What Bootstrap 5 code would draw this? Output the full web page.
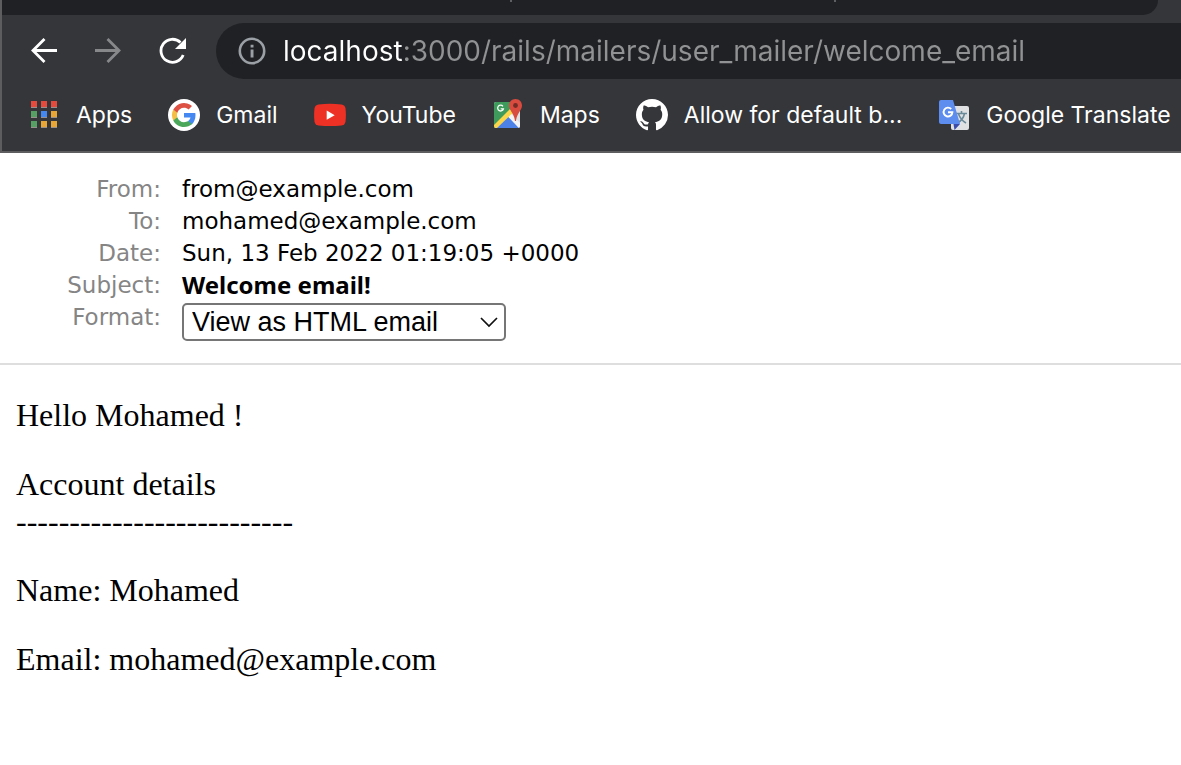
<!DOCTYPE html>
<html lang="en">
<head>
<meta charset="utf-8">
<meta name="viewport" content="width=device-width, initial-scale=1">
<title>Welcome email!</title>
<link href="https://cdn.jsdelivr.net/npm/bootstrap@5.3.0/dist/css/bootstrap.min.css" rel="stylesheet">
<style>
  body { background: #fff; color: #000; }
  .browser { background: #35363a; border-left: 2px solid #5d5d60; border-bottom: 2px solid #5d5d60; font-family: Inter, sans-serif; color: #fff; overflow: hidden; }
  .tabstrip { height: 15px; background: #202124; border-bottom-right-radius: 18px; margin-right: 23px; padding: 0 322px 0 508px; }
  .tabstrip span { width: 2px; height: 2px; background: #5f6063; }
  .toolbar { padding: 8px 0 8px 29px; }
  .toolbar button { width: 26px; height: 28px; margin-right: 38px; line-height: 1; }
  .toolbar button.reload { margin-right: 31px; }
  .omnibox { height: 56px; background: #202124; border-radius: 28px 0 0 28px; padding-left: 22px; }
  .address { color: #919294; font-size: 28px; line-height: 36px; margin-left: 17px; outline: 0;
    background: linear-gradient(90deg, #fff 120px, #919294 120px); -webkit-background-clip: text; background-clip: text; -webkit-text-fill-color: transparent; }
  .bookmarks { padding: 8px 0 16px 26px; gap: 36px; font-size: 23px; line-height: 40px; }
  .bookmarks a { gap: 16px; }
  svg { display: block; flex: none; }
  .mail-head { font-family: "DejaVu Sans", sans-serif; font-size: 23px; line-height: 32px; padding: 20px 0 22px; border-bottom: 2px solid #dedede; }
  .mail-head dt { width: 161px; color: #858585; }
  .mail-head dd { margin-left: 21px; }
  .subject { font-family: "Noto Sans", sans-serif; font-size: 24px; }
  .format { font-family: "Liberation Sans", sans-serif; font-size: 27px; line-height: 34px; width: 324px; height: 38px; margin-top: 2px; padding: 0 8px; color: #000; border: 2px solid #767676; border-radius: 5px; background-position: right 6px center; background-size: 18px 12px;
    background-image: url("data:image/svg+xml,%3csvg xmlns='http://www.w3.org/2000/svg' viewBox='0 0 18 12'%3e%3cpath d='M1 2l8 8 8-8' fill='none' stroke='%23111' stroke-width='1.700'/%3e%3c/svg%3e"); }
  .mail-body { font-family: "Liberation Serif", serif; font-size: 32px; line-height: 37px; padding: 32px 16px; }
  .mail-body p { margin-bottom: 32px; }
</style>
</head>
<body>
<header class="browser">
  <div class="tabstrip d-flex justify-content-between"><span></span><span></span></div>
  <div class="toolbar d-flex align-items-center">
    <button type="button" class="btn p-0 border-0" aria-label="Back">
      <svg width="26" height="28" viewBox="0 0 26 28" fill="none" stroke="#fff" stroke-width="2.800"><path d="M13.500 2 2 13.500 13.500 25M2 13.500h24"/></svg>
    </button>
    <button type="button" class="btn p-0 border-0" aria-label="Forward">
      <svg width="26" height="28" viewBox="0 0 26 28" fill="none" stroke="#87888a" stroke-width="2.800"><path d="M12.500 2 24 13.500 12.500 25M24 13.500H0"/></svg>
    </button>
    <button type="button" class="btn p-0 border-0 reload" aria-label="Reload">
      <svg width="27" height="28" viewBox="0 0 27 28"><path d="M21.500 5.500A11.500 11.500 0 1 0 24.200 18" fill="none" stroke="#fff" stroke-width="2.800"/><path d="M27 1v11H16z" fill="#fff"/></svg>
    </button>
    <form class="omnibox d-flex align-items-center flex-grow-1">
      <svg width="28" height="28" viewBox="0 0 28 28"><circle cx="14" cy="14" r="12.200" fill="none" stroke="#9aa0a6" stroke-width="2.600"/><path d="M12.600 7.700h2.900v2.800h-2.900zM12.600 12.600h2.900v8h-2.900z" fill="#9aa0a6"/></svg>
      <input class="address flex-grow-1 border-0 p-0" type="text" aria-label="Address" value="localhost:3000/rails/mailers/user_mailer/welcome_email">
    </form>
  </div>
  <nav class="bookmarks d-flex text-nowrap" aria-label="Bookmarks">
    <a href="#" class="d-flex align-items-center text-reset text-decoration-none">
      <svg width="32" height="32" viewBox="0 0 32 32"><path d="M3 2h6v6H3zM13 2h6v6h-6zM23 2h6v6h-6z" fill="#e54b3c"/><path d="M3 12h6v6H3zM3 22h6v6H3z" fill="#55a062"/><path d="M13 12h6v6h-6z" fill="#4688f1"/><path d="M23 12h6v6h-6zM13 22h6v6h-6zM23 22h6v6h-6z" fill="#e8a636"/><path d="M3 8h6v1H3zM13 8h6v1h-6zM23 8h6v1h-6zM3 18h6v1H3zM13 18h6v1h-6zM23 18h6v1h-6zM3 28h6v1H3zM13 28h6v1h-6zM23 28h6v1h-6z" fill="#97908c"/></svg>
      Apps</a>
    <a href="#" class="d-flex align-items-center text-reset text-decoration-none">
      <svg width="32" height="32" viewBox="0 0 32 32"><circle cx="16" cy="16" r="16" fill="#fff"/><g transform="translate(4 4)"><path d="M23.500 12.300c0-.8-.1-1.600-.2-2.300H12v4.600h6.500c-.3 1.500-1.100 2.700-2.400 3.600v3h3.900c2.200-2.100 3.500-5.200 3.500-8.900z" fill="#4688f1"/><path d="M12 24c3.200 0 6-1.100 8-2.900l-3.900-3c-1.100.7-2.500 1.200-4.100 1.200-3.100 0-5.800-2.100-6.700-5H1.300v3.100C3.300 21.300 7.300 24 12 24z" fill="#4ba75a"/><path d="M5.300 14.300a7.200 7.200 0 0 1 0-4.600V6.600h-4a12 12 0 0 0 0 10.800z" fill="#f6be42"/><path d="M12 4.700c1.800 0 3.300.6 4.600 1.800L20 3.100A12 12 0 0 0 1.300 6.600l4 3.100c.9-2.900 3.600-5 6.700-5z" fill="#dd5144"/></g></svg>
      Gmail</a>
    <a href="#" class="d-flex align-items-center text-reset text-decoration-none">
      <svg width="32" height="32" viewBox="0 0 32 32"><path d="M4.500 5.500Q16 4 27.500 5.500 31 6 31.500 9.500q.8 6.500 0 13-.5 3.500-4 4-11.500 1.200-23 0-3.500-.5-4-4-.8-6.500 0-13 .5-3.500 4-4z" fill="#ed3124"/><path d="M12.700 11.500v9.300l8-4.600z" fill="#fff"/></svg>
      YouTube</a>
    <a href="#" class="d-flex align-items-center text-reset text-decoration-none">
      <svg width="32" height="32" viewBox="0 0 32 32"><defs><clipPath id="map"><rect x="2" y="3" width="26" height="26" rx="2"/></clipPath></defs><g clip-path="url(#map)"><path d="M2 3h26v26H2z" fill="#dcdfe3"/><path d="M2 3h20v8L2 29z" fill="#3f9b5b"/><path d="m18 10 3 4L6 29H2v-3z" fill="#fbd54b"/><path d="M5 29 16.500 18 27 29z" fill="#4c81e8"/><path d="m16.500 18 3-3L29 25v4h-2z" fill="#f3f3f3"/></g><path d="M10.900 7.300a2.900 2.900 0 1 0 .5 2.500H8.700" fill="none" stroke="#fff" stroke-width="1.300"/><path d="M23.500 0C19.700 0 17 2.900 17 6.500c0 5 5 7 6 15.500h1c1-8.500 6-10.500 6-15.500C30 2.900 27.300 0 23.500 0z" fill="#d94b3f"/><circle cx="23.500" cy="6.500" r="2.400" fill="#742c27"/></svg>
      Maps</a>
    <a href="#" class="d-flex align-items-center text-reset text-decoration-none">
      <svg width="32" height="32" viewBox="0 0 16 16" fill="#fff"><path d="M8 0C3.580 0 0 3.580 0 8c0 3.540 2.290 6.530 5.470 7.590.4.070.55-.17.55-.38 0-.19-.01-.82-.01-1.490-2.010.37-2.530-.49-2.690-.94-.09-.23-.48-.94-.82-1.130-.28-.15-.68-.52-.01-.53.63-.01 1.080.58 1.230.82.72 1.210 1.870.87 2.330.66.07-.52.28-.87.51-1.070-1.780-.2-3.640-.89-3.640-3.950 0-.87.31-1.590.82-2.150-.08-.2-.36-1.020.08-2.120 0 0 .67-.21 2.200.82.640-.18 1.320-.27 2-.27s1.360.09 2 .27c1.530-1.040 2.200-.82 2.200-.82.440 1.100.16 1.920.08 2.120.51.56.82 1.270.82 2.150 0 3.070-1.870 3.750-3.650 3.950.29.25.54.73.54 1.480 0 1.070-.01 1.930-.01 2.200 0 .21.15.46.55.38A8.010 8.010 0 0 0 16 8c0-4.420-3.580-8-8-8z"/></svg>
      Allow for default b...</a>
    <a href="#" class="d-flex align-items-center text-reset text-decoration-none">
      <svg width="32" height="32" viewBox="0 0 32 32"><rect x="13" y="7" width="18" height="24" rx="2" fill="#dfe1e3"/><path d="M18 14.500h11M23.500 12v2.500M26.500 14.500c-.8 4-3.500 7.500-7 9.500M20.500 15c1.500 4 4 7 7.500 9" fill="none" stroke="#6b8a99" stroke-width="1.600"/><path d="M15.500 25H22l-5.500 6z" fill="#3b4cab"/><path d="M3 1h12l7 24H3q-2 0-2-2V3q0-2 2-2z" fill="#5d8def"/><path d="M13.200 10A4.400 4.400 0 1 0 14.400 13.200H10" fill="none" stroke="#fff" stroke-width="1.900"/></svg>
      Google Translate</a>
  </nav>
</header>
<main>
  <dl class="mail-head mb-0">
    <div class="d-flex"><dt class="text-end fw-normal">From:</dt><dd class="mb-0">from@example.com</dd></div>
    <div class="d-flex"><dt class="text-end fw-normal">To:</dt><dd class="mb-0">mohamed@example.com</dd></div>
    <div class="d-flex"><dt class="text-end fw-normal">Date:</dt><dd class="mb-0">Sun, 13 Feb 2022 01:19:05 +0000</dd></div>
    <div class="d-flex"><dt class="text-end fw-normal">Subject:</dt><dd class="subject mb-0 fw-bold">Welcome email!</dd></div>
    <div class="d-flex"><dt class="text-end fw-normal"><label for="format">Format:</label></dt><dd class="mb-0">
      <select id="format" class="form-select format"><option>View as HTML email</option><option>View as plain-text email</option></select></dd></div>
  </dl>
  <article class="mail-body">
    <p>Hello Mohamed !</p>
    <p>Account details<br>--------------------------</p>
    <p>Name: Mohamed</p>
    <p>Email: mohamed@example.com</p>
  </article>
</main>
<script src="https://cdn.jsdelivr.net/npm/bootstrap@5.3.0/dist/js/bootstrap.bundle.min.js"></script>
</body>
</html>
